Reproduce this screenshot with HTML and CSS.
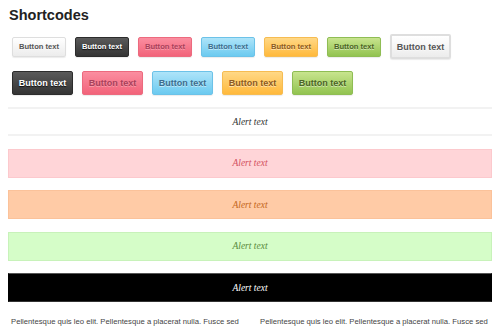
FILE: index.html
```html
<!DOCTYPE html>
<html lang="en">
<head>
    <meta charset="UTF-8">
    <meta name="viewport" content="width=device-width, initial-scale=1.0">
    <title>Shortcodes</title>
    <link rel="stylesheet" href="styles.css">
</head>
<body>

    <h2 class="title">Shortcodes</h2>

    <div class="btn-row">
        <a class="btn btn-white">Button text</a>
        <a class="btn btn-dark">Button text</a>
        <a class="btn btn-pink">Button text</a>
        <a class="btn btn-blue">Button text</a>
        <a class="btn btn-orange">Button text</a>
        <a class="btn btn-green">Button text</a>
        <a class="btn btn-white btn-large btn-outline">Button text</a>
    </div>

    <div class="btn-row">
        <a class="btn btn-dark btn-large">Button text</a>
        <a class="btn btn-pink btn-large">Button text</a>
        <a class="btn btn-blue btn-large">Button text</a>
        <a class="btn btn-orange btn-large">Button text</a>
        <a class="btn btn-green btn-large">Button text</a>
    </div>

    <div class="alert alert-plain">Alert text</div>
    <div class="alert alert-red">Alert text</div>
    <div class="alert alert-orange">Alert text</div>
    <div class="alert alert-green">Alert text</div>
    <div class="alert alert-black">Alert text</div>

    <div class="columns">
        <p>Pellentesque quis leo elit. Pellentesque a placerat nulla. Fusce sed</p>
        <p>Pellentesque quis leo elit. Pellentesque a placerat nulla. Fusce sed</p>
    </div>

</body>
</html>
```

FILE: styles.css
```css
body {
    font-family: 'Liberation Sans', Arial, sans-serif;
    background: #fff;
    color: #444;
    margin: 0;
    padding: 0 8px;
}

.title {
    font-size: 14.5px;
    line-height: 20px;
    font-weight: bold;
    color: #222;
    margin: 5px 0 0 1px;
}

/* filas de botones */
.btn-row {
    display: flex;
    align-items: center;
    gap: 9px;
    padding-left: 4px;
    height: 25px;
    margin-top: 9px;
}

.btn-row + .btn-row {
    height: 24px;
    margin-top: 12px;
}

.btn {
    display: flex;
    align-items: center;
    justify-content: center;
    box-sizing: border-box;
    width: 54px;
    height: 20px;
    font-size: 7.6px;
    font-weight: bold;
    border: 1px solid #ddd;
    border-radius: 2px;
    box-shadow: 0 1px 1px rgba(0, 0, 0, 0.08);
    text-shadow: 0 1px 0 rgba(255, 255, 255, 0.5);
}

.btn-large {
    width: 61px;
    height: 24px;
    font-size: 9px;
}

.btn-outline {
    height: 25px;
    border: 2px solid #e6e6e6;
    color: #444;
}

.btn-white {
    background: linear-gradient(#ffffff, #ececec);
    border-color: #dedede;
    color: #555;
}

.btn-dark {
    background: linear-gradient(#5a5a5a, #343434);
    border-color: #2c2c2c;
    color: #fff;
    text-shadow: 0 1px 1px rgba(0, 0, 0, 0.8);
}

.btn-pink {
    background: linear-gradient(#fb8ea0, #f2637a);
    border-color: #ec6a7e;
    color: #a8405a;
    text-shadow: 0 1px 0 rgba(255, 255, 255, 0.3);
}

.btn-blue {
    background: linear-gradient(#aee4f9, #6ccaf0);
    border-color: #6cc2e8;
    color: #3c6c8c;
}

.btn-orange {
    background: linear-gradient(#ffd886, #ffb93c);
    border-color: #f6bc52;
    color: #8c5a20;
}

.btn-green {
    background: linear-gradient(#c8e48e, #92c350);
    border-color: #8fbd54;
    color: #4a6424;
}

/* alertas */
.alert {
    box-sizing: border-box;
    height: 29px;
    display: flex;
    align-items: center;
    justify-content: center;
    font-family: 'Liberation Serif', Georgia, serif;
    font-style: italic;
    font-size: 9.5px;
    border: 1px solid transparent;
    margin-bottom: 12.5px;
}

.alert-plain {
    margin-top: 12px;
    border: 0;
    border-top: 2px solid #f2f2f2;
    border-bottom: 2px solid #f2f2f2;
    color: #333;
}

.alert-red {
    background: #ffd5d8;
    border-color: #fcc9cd;
    color: #d24f5e;
}

.alert-orange {
    background: #ffcba6;
    border-color: #fbc29a;
    color: #c4661a;
}

.alert-green {
    background: #d5fdc8;
    border-color: #c8f2ba;
    color: #5a8a3c;
}

.alert-black {
    background: #000;
    border-color: #555 #000 #333 #000;
    color: #fff;
}

/* columnas de texto */
.columns {
    display: grid;
    grid-template-columns: 1fr 1fr;
    gap: 20px;
    padding: 0 3px;
    margin-top: 7px;
}

.columns p {
    margin: 0;
    font-size: 7.7px;
    line-height: 14px;
    color: #444;
    white-space: nowrap;
}
```
